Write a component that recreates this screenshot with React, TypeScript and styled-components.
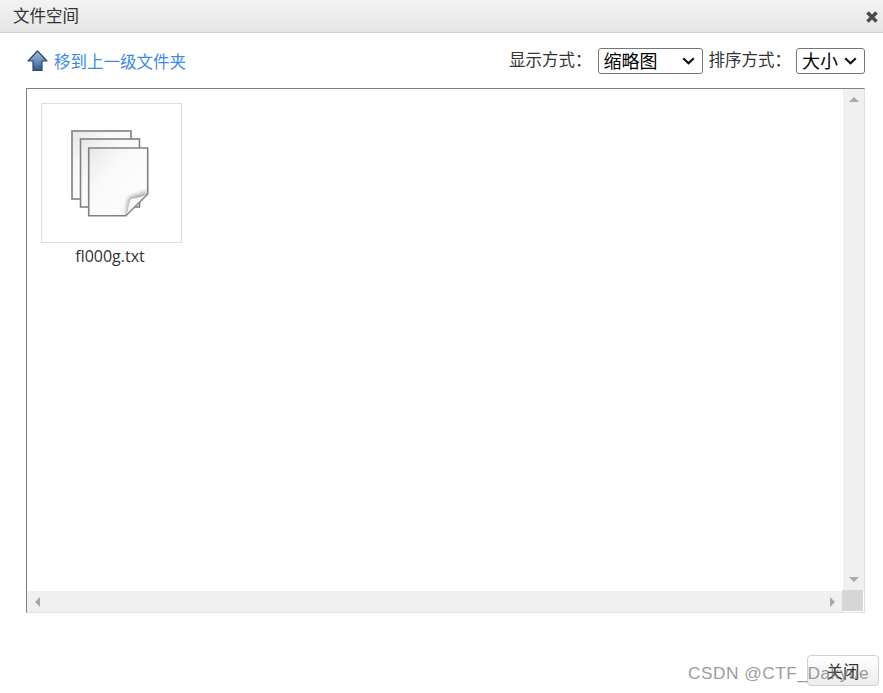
import React from "react";
import styled, { createGlobalStyle } from "styled-components";

const GlobalStyle = createGlobalStyle`
  html, body {
    margin: 0;
    padding: 0;
    background: #fff;
  }
  body {
    font-family: "Noto Sans CJK SC", "Liberation Sans", sans-serif;
  }
`;

const chevron =
  "data:image/svg+xml,%3Csvg xmlns='http://www.w3.org/2000/svg' width='13' height='8' viewBox='0 0 13 8'%3E%3Cpath d='M1.2 1.3 L6.5 6.2 L11.8 1.3' fill='none' stroke='%23111' stroke-width='2.2'/%3E%3C/svg%3E";

const Dialog = styled.div`
  position: relative;
  width: 883px;
  height: 693px;
  display: flex;
  flex-direction: column;
  overflow: hidden;
  background: #fff;
`;

const Header = styled.header`
  height: 32px;
  flex: none;
  box-sizing: content-box;
  display: flex;
  align-items: center;
  justify-content: space-between;
  padding: 0 4px 0 13px;
  background: linear-gradient(#f3f3f3, #e5e5e5);
  border-bottom: 1px solid #d0d0d0;
`;

const Title = styled.h1`
  margin: 0 0 2px;
  font-size: 16.5px;
  font-weight: 400;
  color: #333;
`;

const CloseButton = styled.button`
  width: 14px;
  height: 14px;
  padding: 0;
  border: 0;
  background: none;
  display: flex;
  margin-top: 2px;
`;

const Toolbar = styled.div`
  height: 55px;
  flex: none;
  display: flex;
  align-items: center;
  padding: 0 18px 0 27px;
`;

const UpLink = styled.a`
  display: flex;
  align-items: center;
  gap: 6px;
  font-size: 16.5px;
  color: #3a8ae6;
  text-decoration: none;
`;

const Options = styled.div`
  margin-left: auto;
  display: flex;
  align-items: center;
`;

const OptionLabel = styled.label<{ $gap: number }>`
  font-size: 16.5px;
  color: #333;
  margin: 0 ${(p) => p.$gap}px 3px 0;
  white-space: nowrap;
`;

const Select = styled.select<{ $width: number; $gap?: number }>`
  appearance: none;
  width: ${(p) => p.$width}px;
  height: 26px;
  box-sizing: border-box;
  margin: 0 ${(p) => p.$gap ?? 0}px 0 0;
  padding: 0 0 3px 5px;
  font-family: "Noto Sans CJK SC", sans-serif;
  font-size: 18px;
  line-height: 22px;
  color: #000;
  background: #fff url("${chevron}") no-repeat right 7px center;
  border: 1px solid #767676;
  border-radius: 3px;
`;

const FileBox = styled.div`
  height: 525px;
  flex: none;
  margin: 0 18px 0 26px;
  box-sizing: border-box;
  border-style: solid;
  border-width: 1px;
  border-color: #808080 #e0e0e0 #e0e0e0 #808080;
  display: grid;
  grid-template-columns: 1fr 21px;
  grid-template-rows: 1fr 21px;
`;

const FileArea = styled.div`
  padding: 14px;
`;

const FileItem = styled.div`
  width: 141px;
  display: flex;
  flex-direction: column;
`;

const Thumb = styled.div`
  width: 141px;
  height: 140px;
  box-sizing: border-box;
  border: 1px solid #ddd;
  display: flex;
  align-items: center;
  justify-content: center;
  padding-right: 4px;
`;

const FileName = styled.div`
  margin-top: 3px;
  font-family: "Open Sans", "Liberation Sans", sans-serif;
  font-size: 16px;
  line-height: 20px;
  text-align: center;
  color: #333;
  padding-right: 3px;
`;

const ScrollTrack = styled.div<{ $vertical?: boolean }>`
  background: #f0f0f0;
  display: flex;
  flex-direction: ${(p) => (p.$vertical ? "column" : "row")};
  align-items: center;
  justify-content: space-between;
  padding: ${(p) => (p.$vertical ? "8px 0 9px" : "0 8px")};
`;

const ScrollCorner = styled.div`
  background: #d6d6d6;
  margin: -1px 1px 1px -1px;
`;

const Arrow = styled.span<{ $dir: "up" | "down" | "left" | "right" }>`
  width: 0;
  height: 0;
  border-style: solid;
  border-color: transparent;
  ${(p) =>
    p.$dir === "up"
      ? "border-width: 0 5px 5px; border-bottom-color: #a8a8a8;"
      : p.$dir === "down"
      ? "border-width: 5px 5px 0; border-top-color: #a8a8a8;"
      : p.$dir === "left"
      ? "border-width: 5px 5px 5px 0; border-right-color: #a8a8a8;"
      : "border-width: 5px 0 5px 5px; border-left-color: #a8a8a8;"}
`;

const Footer = styled.footer`
  flex: 1;
  display: flex;
  justify-content: flex-end;
  align-items: flex-start;
  padding: 42px 4px 0 0;
`;

const FooterButton = styled.button`
  width: 72px;
  height: 31px;
  box-sizing: border-box;
  font-family: "Noto Sans CJK SC", sans-serif;
  font-size: 16.5px;
  color: #333;
  background: linear-gradient(#ffffff, #ececec);
  border: 1px solid #cfcfcf;
  border-radius: 4px;
  padding: 0;
`;

const Watermark = styled.div`
  position: absolute;
  z-index: 2;
  left: 688px;
  top: 661px;
  font-family: "Liberation Sans", sans-serif;
  font-size: 17.3px;
  letter-spacing: 0.5px;
  line-height: 24px;
  color: rgba(120, 120, 120, 0.75);
  white-space: nowrap;
  pointer-events: none;
`;

const CloseIcon = () => (
  <svg width="14" height="14" viewBox="0 0 14 14">
    <path d="M2.5 2.5 L11.5 11.5 M11.5 2.5 L2.5 11.5" stroke="#4a4a4a" strokeWidth="3.4" />
  </svg>
);

const UpIcon = () => (
  <svg width="21" height="22" viewBox="0 0 21 22">
    <defs>
      <linearGradient id="upFill" x1="0" y1="0" x2="0" y2="1">
        <stop offset="0" stopColor="#a9c1dd" />
        <stop offset="0.55" stopColor="#648ab8" />
        <stop offset="1" stopColor="#2f5688" />
      </linearGradient>
    </defs>
    <path
      d="M10.5 1 L20 11 L15 11 L15 20.5 L6 20.5 L6 11 L1 11 Z"
      fill="url(#upFill)"
      stroke="#2c4468"
      strokeWidth="1.2"
      strokeLinejoin="round"
    />
  </svg>
);

const Sheet = ({ x, y }: { x: number; y: number }) => (
  <rect x={x} y={y} width="59" height="68" fill="url(#sheetFill)" stroke="#808080" strokeWidth="1.6" />
);

const FilesIcon = () => (
  <svg width="78" height="87" viewBox="0 0 78 87">
    <defs>
      <linearGradient id="sheetFill" x1="0" y1="0" x2="1" y2="1">
        <stop offset="0" stopColor="#e6e8e8" />
        <stop offset="0.35" stopColor="#f9f9f9" />
        <stop offset="1" stopColor="#ffffff" />
      </linearGradient>
      <linearGradient id="foldFill" x1="0" y1="0" x2="1" y2="1">
        <stop offset="0" stopColor="#ffffff" />
        <stop offset="1" stopColor="#eeeeee" />
      </linearGradient>
      <filter id="foldBlur" x="-30%" y="-30%" width="160%" height="160%">
        <feGaussianBlur stdDeviation="2" />
      </filter>
      <clipPath id="pageClip">
        <path d="M17.7 18 H76.7 V64 L54.7 85.7 H17.7 Z" />
      </clipPath>
    </defs>
    <Sheet x={1} y={1} />
    <Sheet x={9.5} y={9} />
    <path
      d="M17.7 18 H76.7 V64 L54.7 85.7 H17.7 Z"
      fill="url(#sheetFill)"
      stroke="#808080"
      strokeWidth="1.6"
    />
    <g clipPath="url(#pageClip)">
      <path d="M54 85 C57 79 55 72 59 67 C64 65 71 64 76 61 L76 66 L56 85 Z" fill="#a0a0a0" filter="url(#foldBlur)" />
    </g>
    <path d="M55.4 85 C58 80 57 73 60 69 C65 68 72 67 76 64.5 Z" fill="url(#foldFill)" />
    <path d="M54.7 85.7 L76.7 64" fill="none" stroke="#8c8c8c" strokeWidth="1.2" />
  </svg>
);

export default function App() {
  return (
    <Dialog>
      <GlobalStyle />
      <Header>
        <Title>文件空间</Title>
        <CloseButton aria-label="关闭">
          <CloseIcon />
        </CloseButton>
      </Header>
      <Toolbar>
        <UpLink href="#up">
          <UpIcon />
          移到上一级文件夹
        </UpLink>
        <Options>
          <OptionLabel $gap={6}>显示方式：</OptionLabel>
          <Select $width={105} $gap={6} defaultValue="thumb">
            <option value="thumb">缩略图</option>
            <option value="list">列表</option>
          </Select>
          <OptionLabel $gap={5}>排序方式：</OptionLabel>
          <Select $width={69} defaultValue="size">
            <option value="size">大小</option>
            <option value="name">名称</option>
          </Select>
        </Options>
      </Toolbar>
      <FileBox>
        <FileArea>
          <FileItem>
            <Thumb>
              <FilesIcon />
            </Thumb>
            <FileName>fl000g.txt</FileName>
          </FileItem>
        </FileArea>
        <ScrollTrack $vertical>
          <Arrow $dir="up" />
          <Arrow $dir="down" />
        </ScrollTrack>
        <ScrollTrack>
          <Arrow $dir="left" />
          <Arrow $dir="right" />
        </ScrollTrack>
        <ScrollCorner />
      </FileBox>
      <Footer>
        <FooterButton>关闭</FooterButton>
      </Footer>
      <Watermark>CSDN @CTF_Dakyue</Watermark>
    </Dialog>
  );
}
